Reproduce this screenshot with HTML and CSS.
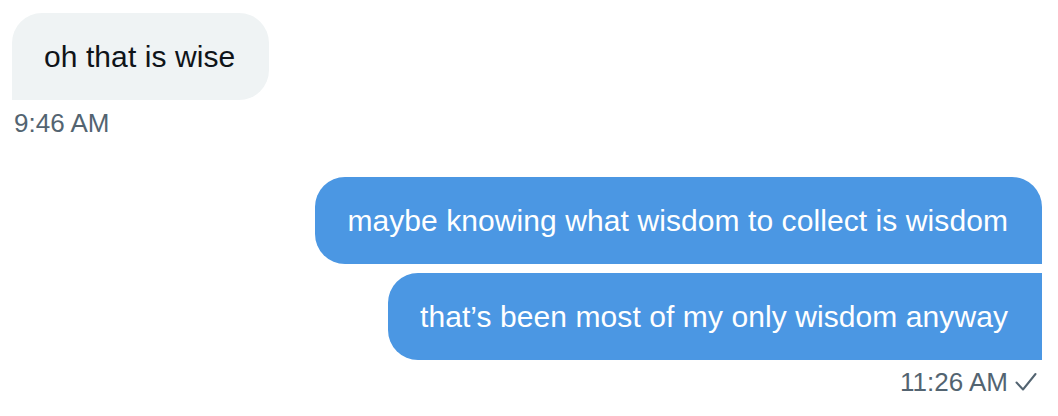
FILE: index.html
```html
<!DOCTYPE html>
<html lang="en">
<head>
    <meta charset="UTF-8">
    <meta name="viewport" content="width=device-width, initial-scale=1.0">
    <title>Messages</title>
    <link rel="stylesheet" href="styles.css">
</head>
<body>
<main class="conversation">
    <div class="group received">
        <div class="bubble">oh that is wise</div>
        <div class="meta">9:46 AM</div>
    </div>

    <div class="group sent">
        <div class="bubble first">maybe knowing what wisdom to collect is wisdom</div>
        <div class="bubble last">that’s been most of my only wisdom anyway</div>
        <div class="meta">
            11:26 AM
            <svg class="check" width="22" height="20" viewBox="0 0 22 20" fill="none">
                <path d="M1.5 10.5 L8 17.5 L20.5 2" stroke="#536471" stroke-width="2" stroke-linecap="round" stroke-linejoin="round"/>
            </svg>
        </div>
    </div>
</main>
</body>
</html>
```

FILE: styles.css
```css
body {
    margin: 0;
    padding: 0;
    background-color: #ffffff;
    font-family: "Liberation Sans", Arial, sans-serif;
    color: #0f1419;
}

.conversation {
    padding: 13px 16px 0 12px;
    display: flex;
    flex-direction: column;
    gap: 39px;
}

.group {
    display: flex;
    flex-direction: column;
    gap: 9px;
}

.received {
    align-items: flex-start;
}

.sent {
    align-items: flex-end;
}

.bubble {
    font-size: 30px;
    line-height: 39px;
    letter-spacing: 0.08px;
    padding: 24px 34px 24px 32px;
    border-radius: 30px;
    white-space: nowrap;
}

.received .bubble {
    background-color: #eff3f4;
    border-bottom-left-radius: 0;
}

.sent .bubble {
    background-color: #4b97e3;
    color: #ffffff;
}

.sent .bubble.first {
    border-bottom-right-radius: 0;
}

.sent .bubble.last {
    border-top-right-radius: 0;
    border-bottom-right-radius: 0;
}

.meta {
    font-size: 26px;
    line-height: 30px;
    color: #536471;
    display: flex;
    align-items: center;
    gap: 7px;
}

.received .meta {
    margin-top: -1px;
    padding-left: 2px;
}

.sent .meta {
    margin-top: -2px;
    padding-right: 5px;
}

.check {
    display: block;
}
```
